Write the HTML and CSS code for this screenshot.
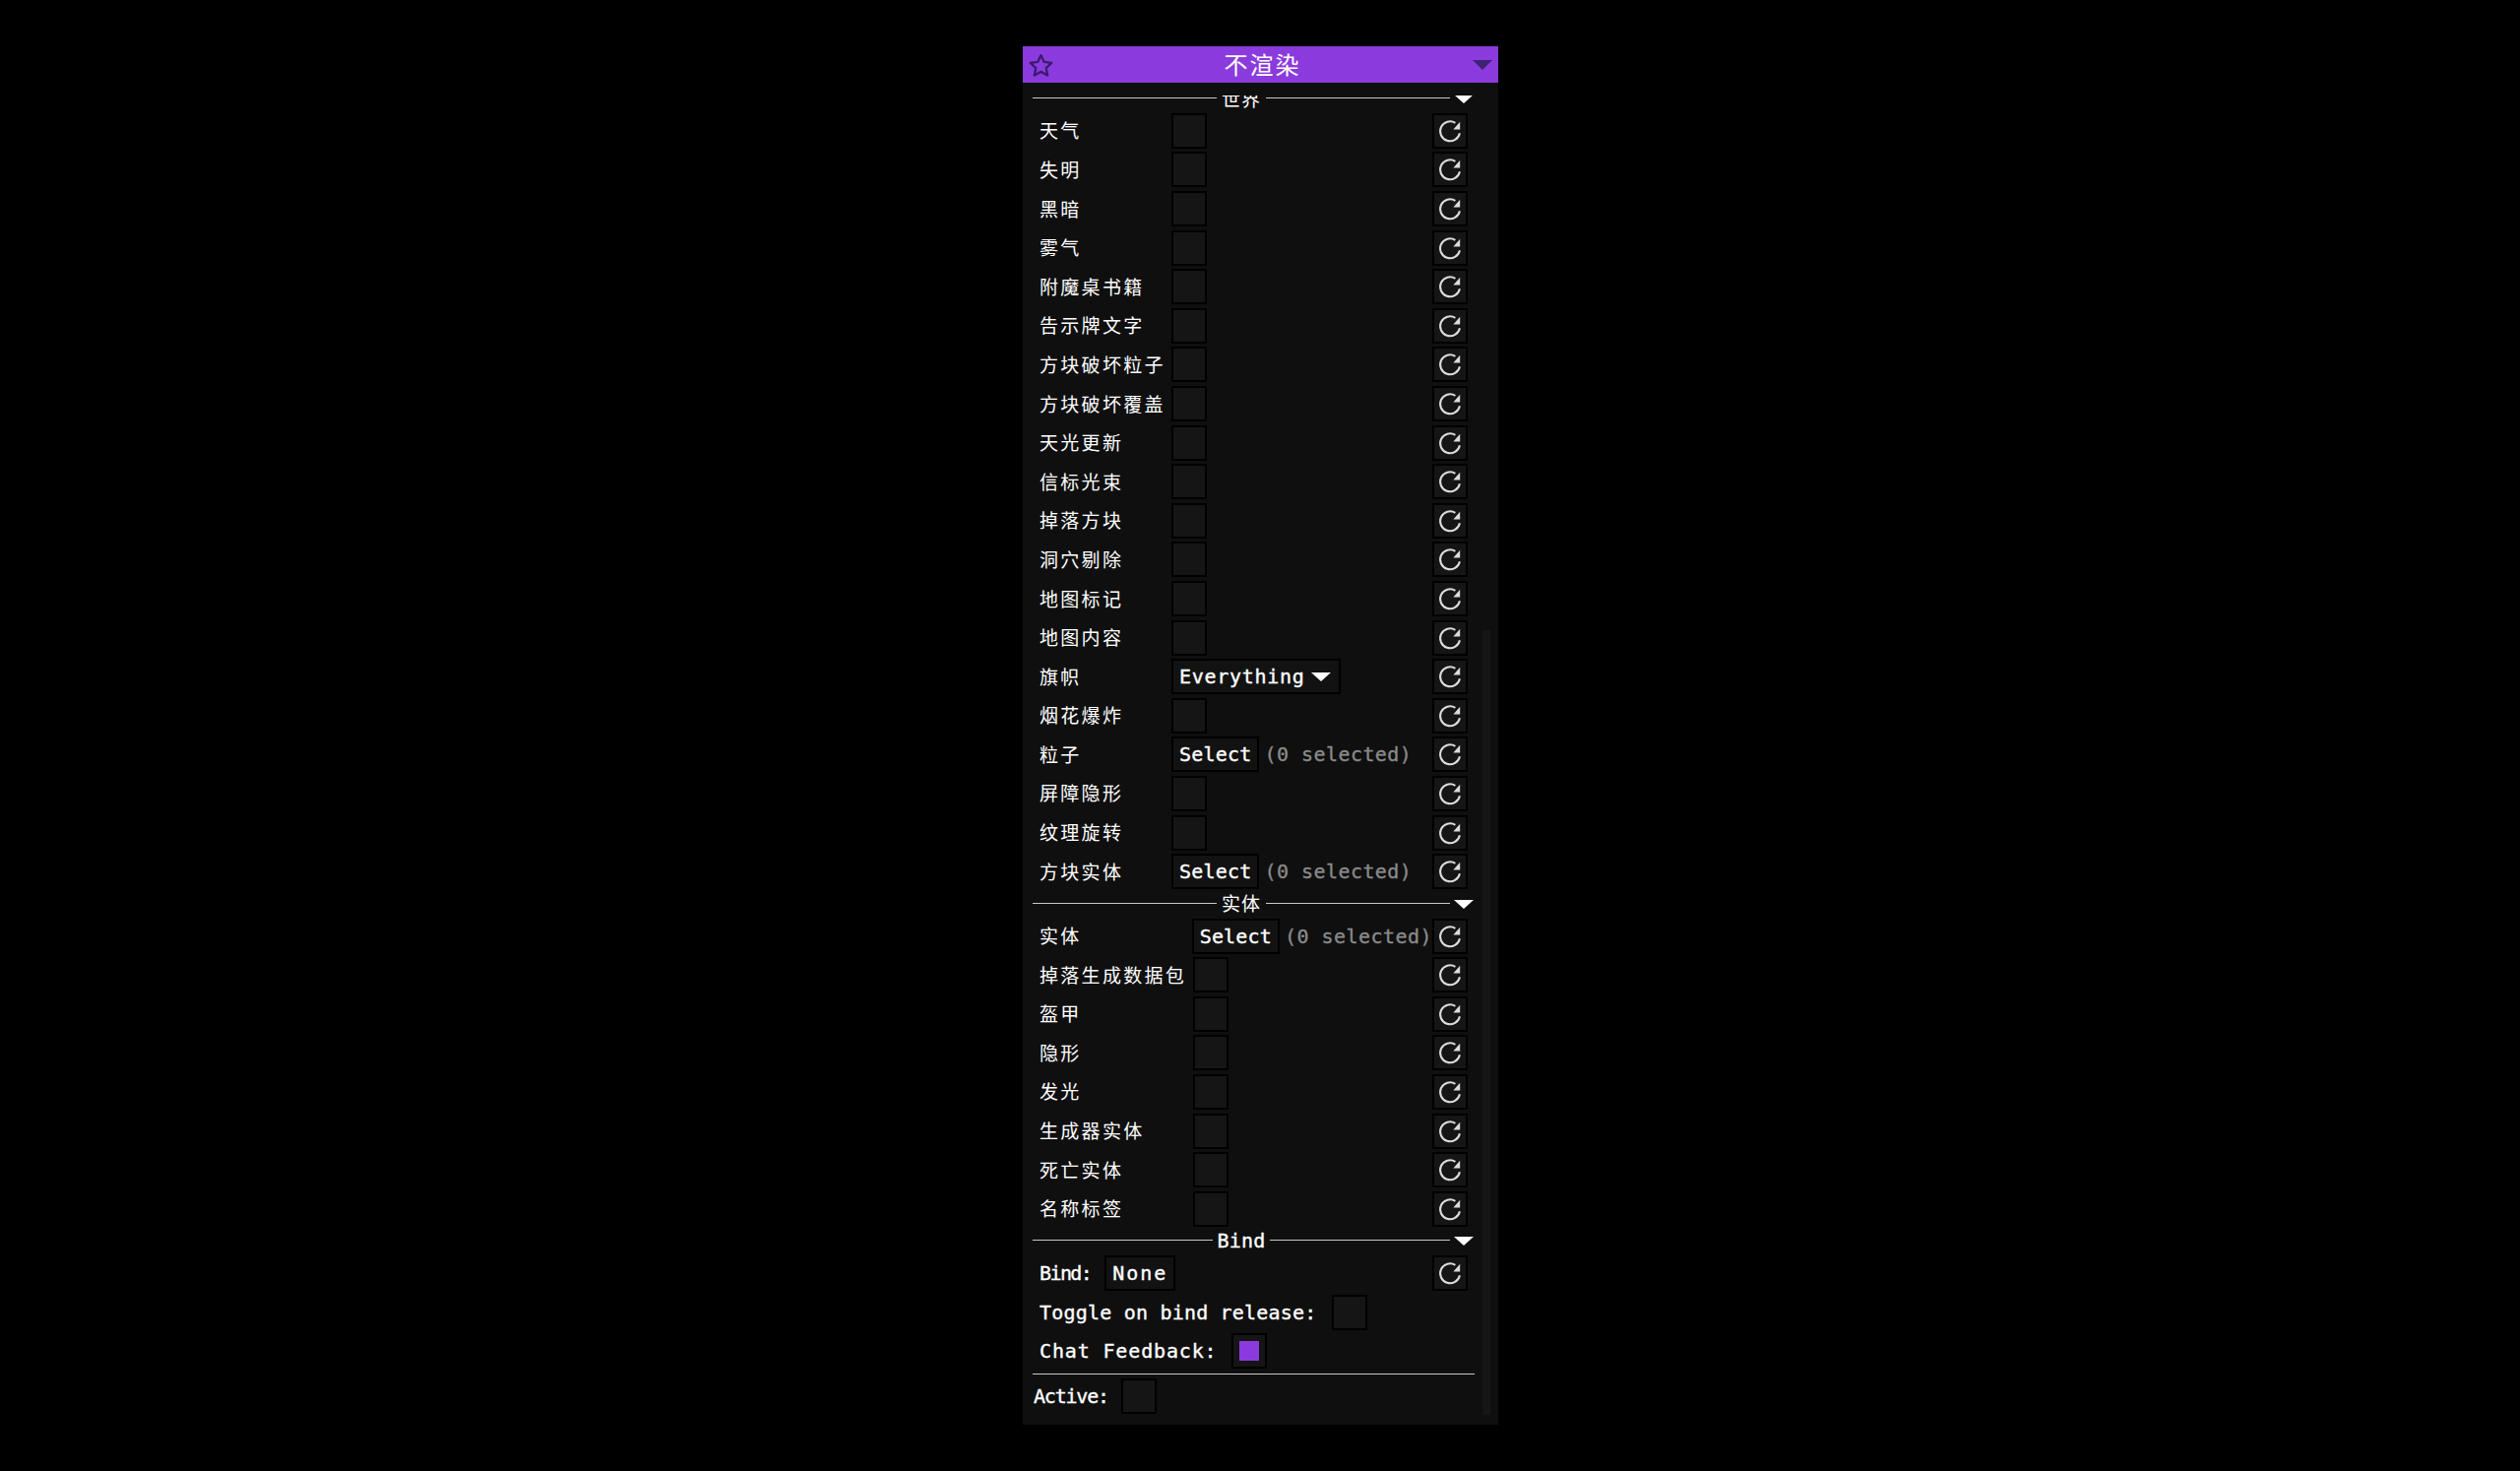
FILE: index.html
```html
<!DOCTYPE html>
<html lang="zh">
<head>
<meta charset="utf-8">
<title>不渲染</title>
<link rel="stylesheet" href="styles.css">
</head>
<body>
<svg class="defs" width="0" height="0" aria-hidden="true">
  <symbol id="reset" viewBox="0 0 32 32">
    <path d="M25.9 18.2A10 10 0 1 1 21.4 7.8" fill="none" stroke="#dcdcdc" stroke-width="2"/>
    <path d="M26.2 6.8V14.4H19.4Z" fill="#dcdcdc"/>
  </symbol>
</svg>
<main class="window">
  <header class="titlebar">
    <svg class="star" viewBox="0 0 24 22"><path d="M12 1.5l3.1 6.6 7.2.9-5.3 5 1.4 7.1L12 17.6l-6.4 3.5L7 14 1.7 9l7.2-.9z" fill="none" stroke="#3a1a6e" stroke-width="2.2" stroke-linejoin="round"/></svg>
    <h1 class="title">不渲染</h1>
    <span class="title-arrow"></span>
  </header>
  <div class="scrollbar"></div>
  <div class="content">
    <section class="section world">
      <div class="heading"><i></i><span>世界</span><i></i><b></b></div>
      <div class="row"><span class="lbl">天气</span><span class="check"></span><button class="reset"><svg><use href="#reset"/></svg></button></div>
      <div class="row"><span class="lbl">失明</span><span class="check"></span><button class="reset"><svg><use href="#reset"/></svg></button></div>
      <div class="row"><span class="lbl">黑暗</span><span class="check"></span><button class="reset"><svg><use href="#reset"/></svg></button></div>
      <div class="row"><span class="lbl">雾气</span><span class="check"></span><button class="reset"><svg><use href="#reset"/></svg></button></div>
      <div class="row"><span class="lbl">附魔桌书籍</span><span class="check"></span><button class="reset"><svg><use href="#reset"/></svg></button></div>
      <div class="row"><span class="lbl">告示牌文字</span><span class="check"></span><button class="reset"><svg><use href="#reset"/></svg></button></div>
      <div class="row"><span class="lbl">方块破坏粒子</span><span class="check"></span><button class="reset"><svg><use href="#reset"/></svg></button></div>
      <div class="row"><span class="lbl">方块破坏覆盖</span><span class="check"></span><button class="reset"><svg><use href="#reset"/></svg></button></div>
      <div class="row"><span class="lbl">天光更新</span><span class="check"></span><button class="reset"><svg><use href="#reset"/></svg></button></div>
      <div class="row"><span class="lbl">信标光束</span><span class="check"></span><button class="reset"><svg><use href="#reset"/></svg></button></div>
      <div class="row"><span class="lbl">掉落方块</span><span class="check"></span><button class="reset"><svg><use href="#reset"/></svg></button></div>
      <div class="row"><span class="lbl">洞穴剔除</span><span class="check"></span><button class="reset"><svg><use href="#reset"/></svg></button></div>
      <div class="row"><span class="lbl">地图标记</span><span class="check"></span><button class="reset"><svg><use href="#reset"/></svg></button></div>
      <div class="row"><span class="lbl">地图内容</span><span class="check"></span><button class="reset"><svg><use href="#reset"/></svg></button></div>
      <div class="row"><span class="lbl">旗帜</span><span class="btn dropdown">Everything<b></b></span><button class="reset"><svg><use href="#reset"/></svg></button></div>
      <div class="row"><span class="lbl">烟花爆炸</span><span class="check"></span><button class="reset"><svg><use href="#reset"/></svg></button></div>
      <div class="row"><span class="lbl">粒子</span><span class="btn">Select</span><span class="muted">(0 selected)</span><button class="reset"><svg><use href="#reset"/></svg></button></div>
      <div class="row"><span class="lbl">屏障隐形</span><span class="check"></span><button class="reset"><svg><use href="#reset"/></svg></button></div>
      <div class="row"><span class="lbl">纹理旋转</span><span class="check"></span><button class="reset"><svg><use href="#reset"/></svg></button></div>
      <div class="row"><span class="lbl">方块实体</span><span class="btn">Select</span><span class="muted">(0 selected)</span><button class="reset"><svg><use href="#reset"/></svg></button></div>
    </section>
    <section class="section entity">
      <div class="heading"><i></i><span>实体</span><i></i><b></b></div>
      <div class="row"><span class="lbl">实体</span><span class="btn">Select</span><span class="muted">(0 selected)</span><button class="reset"><svg><use href="#reset"/></svg></button></div>
      <div class="row"><span class="lbl">掉落生成数据包</span><span class="check"></span><button class="reset"><svg><use href="#reset"/></svg></button></div>
      <div class="row"><span class="lbl">盔甲</span><span class="check"></span><button class="reset"><svg><use href="#reset"/></svg></button></div>
      <div class="row"><span class="lbl">隐形</span><span class="check"></span><button class="reset"><svg><use href="#reset"/></svg></button></div>
      <div class="row"><span class="lbl">发光</span><span class="check"></span><button class="reset"><svg><use href="#reset"/></svg></button></div>
      <div class="row"><span class="lbl">生成器实体</span><span class="check"></span><button class="reset"><svg><use href="#reset"/></svg></button></div>
      <div class="row"><span class="lbl">死亡实体</span><span class="check"></span><button class="reset"><svg><use href="#reset"/></svg></button></div>
      <div class="row"><span class="lbl">名称标签</span><span class="check"></span><button class="reset"><svg><use href="#reset"/></svg></button></div>
    </section>
    <section class="section bind">
      <div class="heading"><i></i><span class="en">Bind</span><i></i><b></b></div>
      <div class="row"><span class="en narrow">Bind:</span><span class="btn loose">None</span><button class="reset"><svg><use href="#reset"/></svg></button></div>
      <div class="row"><span class="en">Toggle on bind release:</span><span class="check"></span></div>
      <div class="row"><span class="en wide">Chat Feedback:</span><span class="check on"></span></div>
    </section>
    <hr class="rule">
    <div class="active-row"><span class="en narrow-active">Active:</span><span class="check"></span></div>
  </div>
</main>
</body>
</html>
```
FILE: styles.css
```css
* { box-sizing: border-box; }
html, body { margin: 0; height: 100%; background: #000; }
body {
  display: flex;
  justify-content: center;
  align-items: flex-start;
  padding: 47px 0 0 1px;
  color: #fff;
  font-family: "Noto Sans CJK SC", sans-serif;
  font-size: 19px;
}
.defs { position: absolute; }
.window {
  position: relative;
  width: 483px;
  height: 1400px;
  background: #0f0f0f;
}
.titlebar {
  display: grid;
  grid-template-columns: 1fr auto 1fr;
  align-items: center;
  height: 37px;
  padding: 0 6px 0 7px;
  background: #8b3bdd;
}
.star { width: 25px; height: 24px; margin-left: -1px; }
.title {
  margin: 0;
  padding: 0 0 2px 3px;
  font-size: 24px;
  font-weight: 400;
  letter-spacing: 2px;
  line-height: 35px;
}
.title-arrow {
  justify-self: end;
  width: 0;
  height: 0;
  border-style: solid;
  border-width: 10px 10px 0;
  border-color: #3f2272 transparent transparent;
}
.scrollbar {
  position: absolute;
  left: 467px;
  top: 593px;
  width: 8px;
  height: 797px;
  background: #161616;
}
.content {
  height: 1353px;
  margin-top: 13px;
  overflow: hidden;
}
.section {
  display: flex;
  flex-direction: column;
  gap: 3.6px;
  padding-left: 10px;
  margin-bottom: 3px;
}
.world { margin-top: -8.5px; }
.heading {
  display: flex;
  align-items: center;
  height: 22px;
  margin-bottom: 0.8px;
  line-height: 22px;
}
.heading i {
  flex: 1;
  height: 1px;
  background: #c9c9c9;
}
.heading span {
  padding: 0 5px;
  letter-spacing: 1px;
  white-space: nowrap;
}
.heading b {
  width: 0;
  height: 0;
  margin: 2px 25px 0 4px;
  border-style: solid;
  border-width: 9px 10px 0;
  border-color: #fff transparent transparent;
}
.row {
  display: flex;
  align-items: center;
  height: 36px;
  padding: 0 31px 0 7px;
  line-height: 36px;
}
.lbl {
  padding-bottom: 1px;
  letter-spacing: 2.3px;
  white-space: nowrap;
}
.world .lbl { width: 134px; }
.entity .lbl { width: 156px; }
.en, .btn, .muted {
  font-family: "DejaVu Sans Mono", monospace;
  font-size: 20px;
  letter-spacing: 0.2px;
  white-space: nowrap;
  -webkit-text-stroke: 0.35px currentColor;
}
.heading .en { letter-spacing: 0.2px; }
.wide { letter-spacing: 0.85px; }
.dropdown { letter-spacing: 0.7px; }
.loose { letter-spacing: 2px; }
.narrow { letter-spacing: -1.6px; }
.narrow-active { letter-spacing: -1.2px; }
.muted {
  margin-left: 5px;
  color: #8a8a8a;
  letter-spacing: 0.45px;
}
.check {
  flex: none;
  display: flex;
  align-items: center;
  justify-content: center;
  width: 36px;
  height: 36px;
  background: #151515;
  border: 2px solid #000;
}
.bind .en + .check { margin-left: 15px; }
.check.on::before {
  content: "";
  width: 20px;
  height: 20px;
  background: #8b3bdd;
}
.btn {
  display: flex;
  align-items: center;
  height: 36px;
  padding: 0 6px;
  background: #121212;
  border: 2px solid #000;
}
.bind .btn { margin-left: 14px; }
.dropdown b {
  width: 0;
  height: 0;
  margin: 0 2px 0 7px;
  border-style: solid;
  border-width: 9px 10px 0;
  border-color: #fff transparent transparent;
}
.reset {
  flex: none;
  width: 36px;
  height: 36px;
  margin-left: auto;
  padding: 0;
  background: #151515;
  border: 2px solid #000;
}
.reset svg {
  display: block;
  width: 32px;
  height: 32px;
}
.rule {
  height: 1px;
  margin: 5px 24px 4px 10px;
  border: 0;
  background: #c9c9c9;
}
.active-row {
  display: flex;
  align-items: center;
  gap: 13px;
  height: 36px;
  padding-left: 11px;
  line-height: 36px;
}
```
